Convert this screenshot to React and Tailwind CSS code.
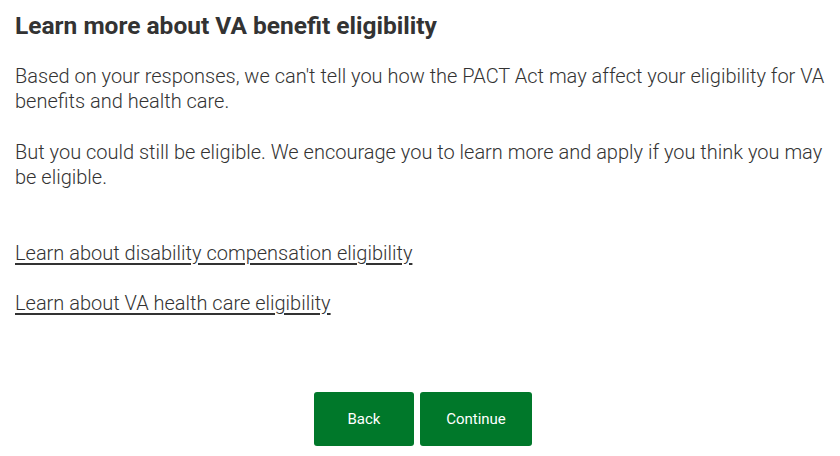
import React from 'react';

const App = () => {
    return (
        <div className="w-[840px] h-[456px] bg-white px-[15px] pt-[10px] text-[#333333]" style={{ fontFamily: 'Roboto, sans-serif' }}>
            <h1 className="text-[24.5px] font-bold leading-[32px] text-[#333333]">Learn more about VA benefit eligibility</h1>
            <p className="mt-[22px] text-[20px] leading-[25px] font-light">
                Based on your responses, we can't tell you how the PACT Act may affect your eligibility for VA benefits and health care.
            </p>
            <p className="mt-[26px] text-[20px] leading-[25px] font-light">
                But you could still be eligible. We encourage you to learn more and apply if you think you may be eligible.
            </p>
            <div className="mt-[51px] flex flex-col gap-[25px] text-[20px] leading-[25px] font-light">
                <a href="#" className="underline underline-offset-[3px] self-start">Learn about disability compensation eligibility</a>
                <a href="#" className="underline underline-offset-[3px] self-start">Learn about VA health care eligibility</a>
            </div>
            <div className="mt-[76px] flex justify-center gap-[6px] pl-[6px]">
                <button className="w-[100px] h-[54px] rounded-[3px] bg-[#00782a] text-white text-[15px]">Back</button>
                <button className="w-[112px] h-[54px] rounded-[3px] bg-[#00782a] text-white text-[15px]">Continue</button>
            </div>
        </div>
    );
};

export default App;
